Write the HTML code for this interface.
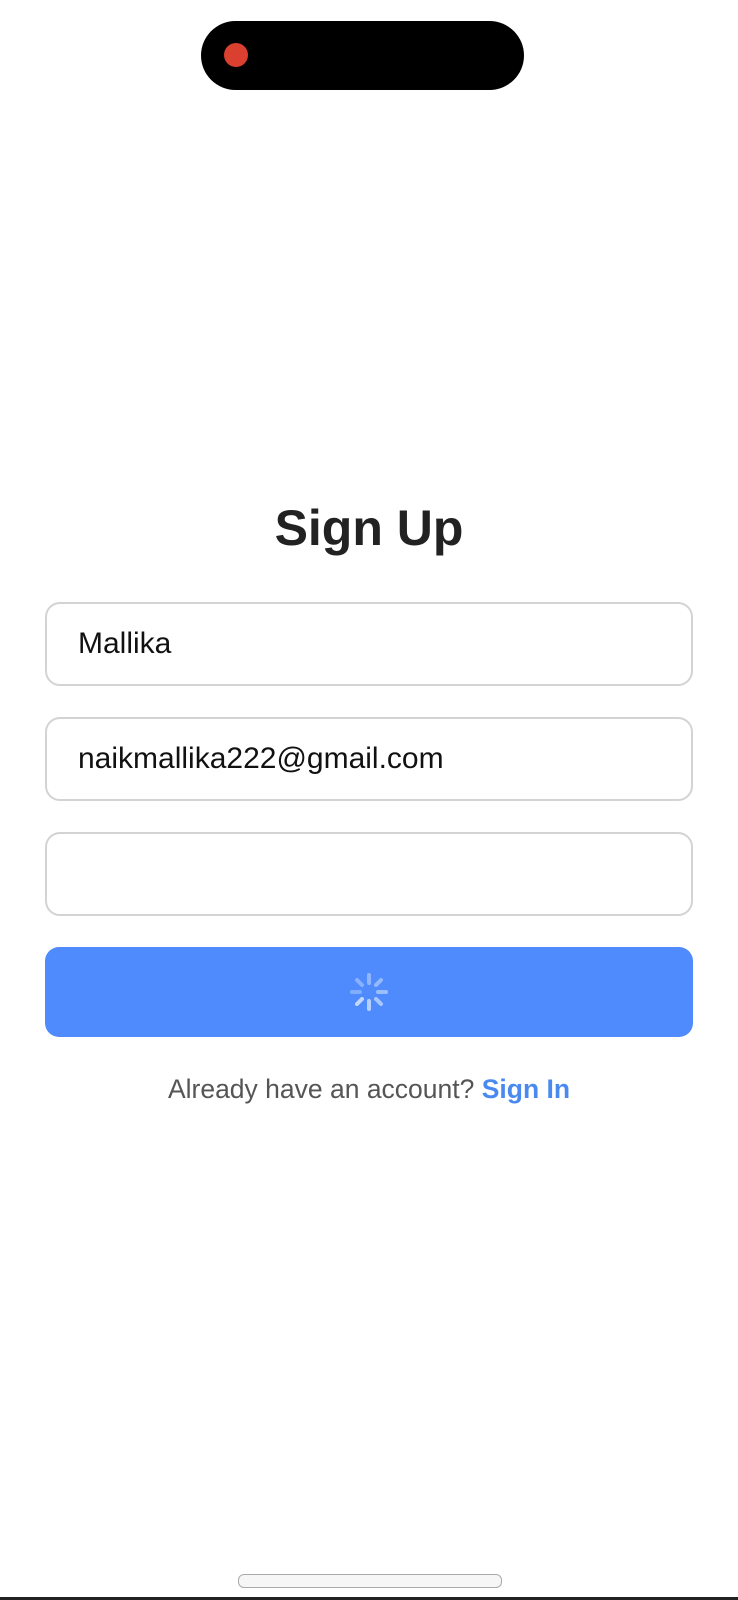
<!DOCTYPE html>
<html><head><meta charset="utf-8"><style>
body{margin:0;width:738px;height:1600px;background:#fff;position:relative;overflow:hidden;font-family:"Liberation Sans",sans-serif}
.pill{position:absolute;left:201px;top:21px;width:323px;height:69px;border-radius:35px;background:#000}
.dot{position:absolute;left:224px;top:43px;width:24px;height:24px;border-radius:50%;background:#d9402f}
h1{position:absolute;top:499px;left:0;width:738px;text-align:center;margin:0;font-size:50px;font-weight:bold;color:#222}
.in{position:absolute;left:45px;height:80px;border:2px solid #d3d3d3;border-radius:15px;font-size:30px;color:#111;line-height:80px;padding-left:31px;box-sizing:content-box;width:613px}
.btn{position:absolute;left:45px;top:947px;width:648px;height:90px;border-radius:14px;background:#4f8bfc}
.ft{position:absolute;top:1074px;width:738px;text-align:center;font-size:26.5px;color:#555}
.ft b{color:#4a8af0}
.home{position:absolute;left:238px;top:1574px;width:262px;height:12px;border:1px solid #aaa;border-radius:6px;background:#f6f6f6}
.bar{position:absolute;left:0;top:1597px;width:738px;height:3px;background:#222}
</style></head><body>
<div class="pill"></div><div class="dot"></div>
<h1>Sign Up</h1>
<div class="in" style="top:602px">Mallika</div>
<div class="in" style="top:717px">naikmallika222@gmail.com</div>
<div class="in" style="top:832px"></div>
<div class="btn"><svg width="648" height="90"><g transform="translate(324,45)" stroke="#cfe0ff" stroke-width="4" stroke-linecap="round">
<line x1="0" y1="-17" x2="0" y2="-9" opacity=".5"/><line x1="12" y1="-12" x2="7" y2="-7" opacity=".55"/><line x1="17" y1="0" x2="9" y2="0" opacity=".6"/><line x1="12" y1="12" x2="7" y2="7" opacity=".7"/><line x1="0" y1="17" x2="0" y2="9" opacity=".8"/><line x1="-12" y1="12" x2="-7" y2="7" opacity=".9"/><line x1="-17" y1="0" x2="-9" y2="0" opacity=".4"/><line x1="-12" y1="-12" x2="-7" y2="-7" opacity=".45"/></g></svg></div>
<div class="ft">Already have an account? <b>Sign In</b></div>
<div class="home"></div><div class="bar"></div>
</body></html>
